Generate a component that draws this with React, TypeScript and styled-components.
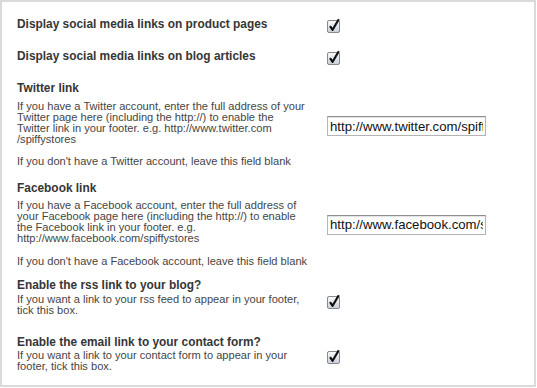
import styled, { createGlobalStyle } from "styled-components";

const GlobalStyle = createGlobalStyle`
  html, body {
    margin: 0;
    padding: 0;
    background: #fff;
  }
  body {
    font-family: "Liberation Sans", Arial, sans-serif;
  }
`;

const Panel = styled.div`
  box-sizing: border-box;
  width: 536px;
  height: 387px;
  border: 2px solid #dadada;
  background: #fff;
  padding: 14.5px 0 0 15px;
`;

const Row = styled.div<{ $top: number }>`
  display: grid;
  grid-template-columns: 310px 1fr;
  align-items: start;
  margin-top: ${({ $top }) => $top}px;
`;

const TextCol = styled.div`
  display: flex;
  flex-direction: column;
  min-width: 0;
`;

const Title = styled.h3`
  margin: 0;
  font-size: 11.9px;
  line-height: 14px;
  font-weight: 700;
  color: #363636;
`;

const Desc = styled.p<{ $gap: number }>`
  margin: ${({ $gap }) => $gap}px 0 0;
  font-size: 11.1px;
  line-height: 11px;
  color: #454545;
  white-space: nowrap;
`;

const ControlCell = styled.div<{ $offset: number }>`
  padding-top: ${({ $offset }) => $offset}px;
  display: flex;
`;

const UrlInput = styled.input`
  box-sizing: border-box;
  width: 159px;
  height: 20px;
  margin: 0;
  padding: 0 2px;
  border: 1px solid #b4b4b4;
  border-top-color: #8e8e8e;
  box-shadow: inset 0 1px 1px rgba(0, 0, 0, 0.12);
  font-family: "Liberation Sans", Arial, sans-serif;
  font-size: 13.2px;
  color: #111;
  background: #fff;
  outline: none;
`;

const CheckSvg = styled.svg`
  display: block;
  overflow: visible;
`;

function CheckBox() {
  return (
    <CheckSvg width="14" height="15" viewBox="0 0 14 15" aria-hidden="true">
      <defs>
        <linearGradient id="aquaBox" x1="0" y1="0" x2="0" y2="1">
          <stop offset="0" stopColor="#fbfbfc" />
          <stop offset="0.5" stopColor="#e3e6ea" />
          <stop offset="1" stopColor="#c9ced6" />
        </linearGradient>
      </defs>
      <rect x="0.5" y="2.5" width="12" height="12" rx="1.5" fill="url(#aquaBox)" stroke="#858a91" />
      <path d="M3 8.2 L5.6 11.8 L11.8 1.2" fill="none" stroke="#111" strokeWidth="2.2" strokeLinejoin="round" />
    </CheckSvg>
  );
}

type Setting = {
  title: string;
  top: number;
  descGap?: number;
  lines?: string[];
  noteGap?: number;
  note?: string;
  control: "check" | "url";
  value?: string;
  offset: number;
};

const settings: Setting[] = [
  { title: "Display social media links on product pages", top: 0, control: "check", offset: 1 },
  { title: "Display social media links on blog articles", top: 16.5, control: "check", offset: 1 },
  {
    title: "Twitter link",
    top: 16,
    descGap: 5.5,
    lines: [
      "If you have a Twitter account, enter the full address of your",
      "Twitter page here (including the http://) to enable the",
      "Twitter link in your footer. e.g. http://www.twitter.com",
      "/spiffystores",
    ],
    noteGap: 11,
    note: "If you don't have a Twitter account, leave this field blank",
    control: "url",
    value: "http://www.twitter.com/spiffystores",
    offset: 35,
  },
  {
    title: "Facebook link",
    top: 14,
    descGap: 5,
    lines: [
      "If you have a Facebook account, enter the full address of",
      "your Facebook page here (including the http://) to enable",
      "the Facebook link in your footer. e.g.",
      "http://www.facebook.com/spiffystores",
    ],
    noteGap: 12.7,
    note: "If you don't have a Facebook account, leave this field blank",
    control: "url",
    value: "http://www.facebook.com/spiffystores",
    offset: 34,
  },
  {
    title: "Enable the rss link to your blog?",
    top: 11,
    descGap: 1.5,
    lines: ["If you want a link to your rss feed to appear in your footer,", "tick this box."],
    control: "check",
    offset: 15.8,
  },
  {
    title: "Enable the email link to your contact form?",
    top: 19.5,
    descGap: 0.5,
    lines: ["If you want a link to your contact form to appear in your", "footer, tick this box."],
    control: "check",
    offset: 13.8,
  },
];

export default function App() {
  return (
    <>
      <GlobalStyle />
      <Panel>
        {settings.map((s) => (
          <Row key={s.title} $top={s.top}>
            <TextCol>
              <Title>{s.title}</Title>
              {s.lines ? (
                <Desc $gap={s.descGap ?? 0}>
                  {s.lines.map((line, i) => (
                    <span key={i}>
                      {line}
                      {i < s.lines!.length - 1 ? <br /> : null}
                    </span>
                  ))}
                </Desc>
              ) : null}
              {s.note ? <Desc $gap={s.noteGap ?? 0}>{s.note}</Desc> : null}
            </TextCol>
            <ControlCell $offset={s.offset}>
              {s.control === "check" ? (
                <CheckBox />
              ) : (
                <UrlInput type="text" defaultValue={s.value} readOnly />
              )}
            </ControlCell>
          </Row>
        ))}
      </Panel>
    </>
  );
}
